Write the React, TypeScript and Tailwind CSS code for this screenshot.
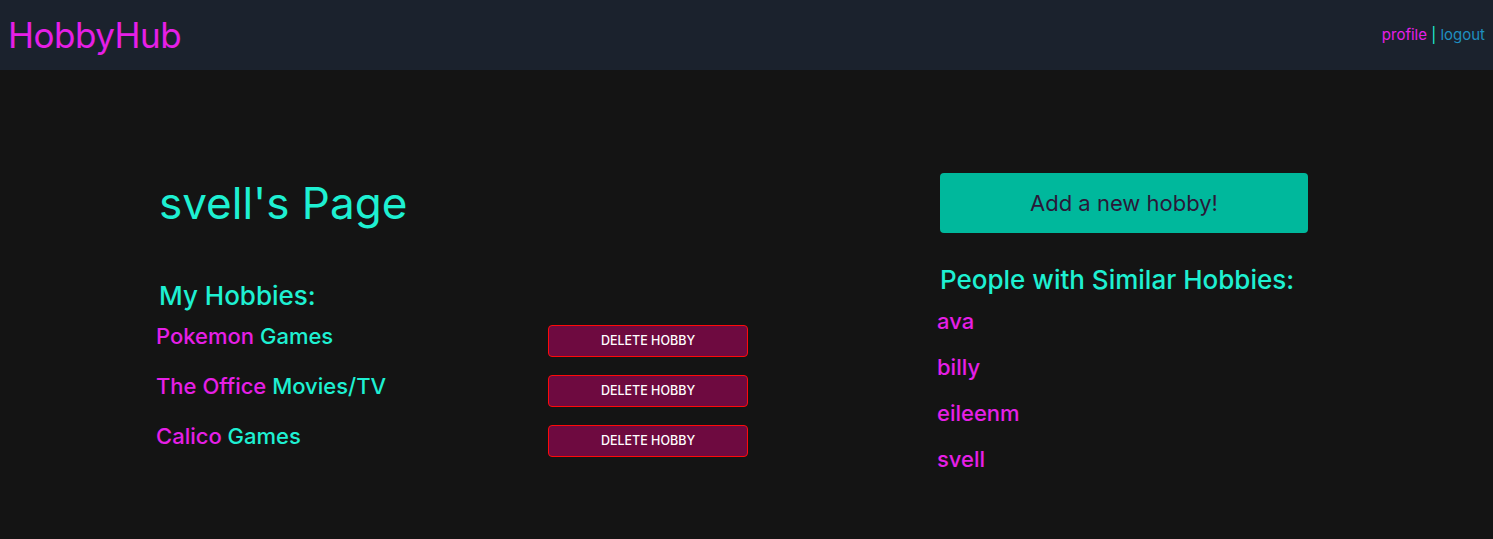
export default function App() {
  const hobbies = [
    { name: 'Pokemon', type: 'Games' },
    { name: 'The Office', type: 'Movies/TV' },
    { name: 'Calico', type: 'Games' },
  ];
  const people = ['ava', 'billy', 'eileenm', 'svell'];

  return (
    <div className="min-h-[539px] bg-[#141414] font-['Inter',sans-serif]">
      <header className="flex h-[70px] items-center justify-between bg-[#1b222d] px-2">
        <span className="text-[35px] tracking-[-0.5px] text-[#e61fe6]">HobbyHub</span>
        <div className="text-[15px]">
          <span className="text-[#e61fe6]">profile</span>
          <span className="text-[#1ef0d2]"> | </span>
          <span className="text-[#1f8fc0]">logout</span>
        </div>
      </header>

      <main className="flex pl-[156px] pt-[103px]">
        <section className="w-[592px]">
          <h1 className="ml-[3px] text-[44px] leading-[60px] text-[#1ef0d2]">svell's Page</h1>
          <h2 className="ml-[3px] mt-[48px] text-[26px] font-medium leading-[30px] text-[#1ef0d2]">
            My Hobbies:
          </h2>
          <ul className="mt-[14px] flex flex-col gap-[18px]">
            {hobbies.map((h) => (
              <li key={h.name} className="flex h-[32px] items-center justify-between">
                <span className="-mt-[10px] text-[22px] font-medium">
                  <span className="text-[#e61fe6]">{h.name}</span>{' '}
                  <span className="text-[#1ef0d2]">{h.type}</span>
                </span>
                <button className="h-[32px] w-[200px] rounded-[4px] border border-[#ff0a0a] bg-[#6e0a40] font-['Inter',sans-serif] text-[12.5px] font-medium uppercase text-white">
                  Delete Hobby
                </button>
              </li>
            ))}
          </ul>
        </section>

        <section className="ml-[189px] w-[371px]">
          <button className="ml-[3px] h-[60px] w-[368px] rounded-[4px] bg-[#00b89c] font-['Inter',sans-serif] text-[22px] text-[#2a1838]">
            Add a new hobby!
          </button>
          <h2 className="ml-[3px] mt-[32px] text-[26px] font-medium leading-[30px] text-[#1ef0d2]">
            People with Similar Hobbies:
          </h2>
          <ul className="mt-[12px] flex flex-col gap-[18px]">
            {people.map((p) => (
              <li key={p} className="text-[22px] font-medium leading-[28px] text-[#e61fe6]">
                {p}
              </li>
            ))}
          </ul>
        </section>
      </main>
    </div>
  );
}
